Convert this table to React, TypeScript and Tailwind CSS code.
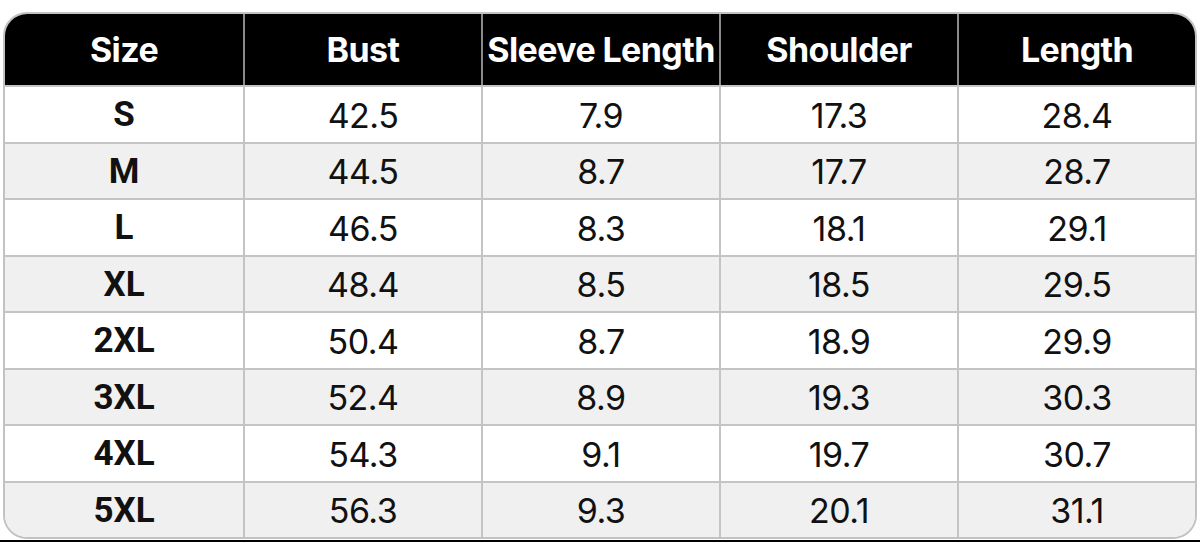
const headers = ["Size", "Bust", "Sleeve Length", "Shoulder", "Length"]

const rows = [
  ["S", "42.5", "7.9", "17.3", "28.4"],
  ["M", "44.5", "8.7", "17.7", "28.7"],
  ["L", "46.5", "8.3", "18.1", "29.1"],
  ["XL", "48.4", "8.5", "18.5", "29.5"],
  ["2XL", "50.4", "8.7", "18.9", "29.9"],
  ["3XL", "52.4", "8.9", "19.3", "30.3"],
  ["4XL", "54.3", "9.1", "19.7", "30.7"],
  ["5XL", "56.3", "9.3", "20.1", "31.1"],
]

export default function App() {
  return (
    <div className="h-[542px] w-[1200px] overflow-hidden bg-white pt-[12px]">
      <div className="mx-[3px] flex h-[527px] flex-col overflow-hidden rounded-[24px] border-2 border-[#c2c2c2]">
        <div className="grid h-[72px] grid-cols-5 bg-black font-['Inter',sans-serif] text-[34px] font-bold tracking-[-0.6px] text-white">
          {headers.map((h, i) => (
            <div
              key={h}
              className={
                "flex items-center justify-center whitespace-nowrap" +
                (i > 0 ? " border-l-2 border-[#8a8a8a]" : "")
              }
            >
              {h}
            </div>
          ))}
        </div>
        {rows.map((row, r) => (
          <div
            key={row[0]}
            className={
              "grid flex-1 grid-cols-5 border-t-2 border-[#c4c4c4] " +
              (r % 2 === 0 ? "bg-white" : "bg-[#f0f0f0]")
            }
          >
            {row.map((cell, i) => (
              <div
                key={i}
                className={
                  "flex items-center justify-center pt-[2px] text-[#111]" +
                  (i > 0
                    ? " border-l-2 border-[#c4c4c4] font-['Inter',sans-serif] text-[34px] tracking-[-0.5px]"
                    : " font-['Roboto',sans-serif] text-[35px] font-bold")
                }
              >
                {cell}
              </div>
            ))}
          </div>
        ))}
      </div>
      <div className="mt-px h-[2px] w-full bg-black" />
    </div>
  )
}
